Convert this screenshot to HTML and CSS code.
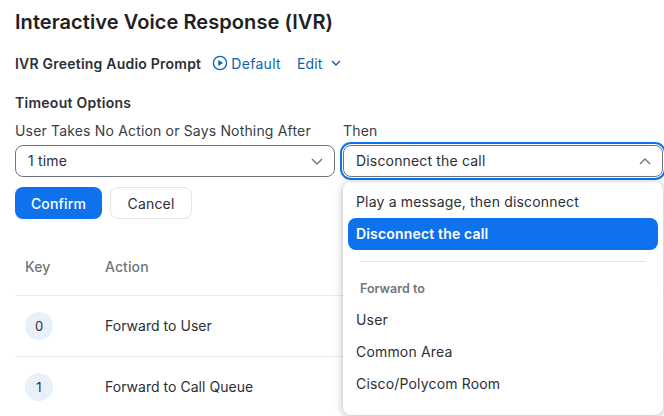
FILE: index.html
```html
<!DOCTYPE html>
<html lang="en">
<head>
<meta charset="utf-8">
<title>Interactive Voice Response (IVR)</title>
<link rel="stylesheet" href="styles.css">
</head>
<body>
<main class="page">
  <h1 class="title">Interactive Voice Response (IVR)</h1>
  <div class="greeting">
    <span class="greeting-label">IVR Greeting Audio Prompt</span>
    <a class="link play-link">
      <svg class="play-icon" width="16" height="16" viewBox="0 0 16 16"><circle cx="8" cy="8" r="6.6" fill="none" stroke="currentColor" stroke-width="1.3"/><path d="M6.3 5.1v5.8L11 8z" fill="currentColor"/></svg>
      Default
    </a>
    <a class="link edit-link">
      Edit
      <svg width="10" height="6" viewBox="0 0 10 6"><path d="M1 1l4 4 4-4" fill="none" stroke="currentColor" stroke-width="1.4"/></svg>
    </a>
  </div>
  <h2 class="section-title">Timeout Options</h2>
  <div class="fields">
    <div class="field">
      <label class="field-label">User Takes No Action or Says Nothing After</label>
      <div class="select">
        <span class="select-text">1 time</span>
        <svg width="12" height="7" viewBox="0 0 12 7"><path d="M1 1l5 5 5-5" fill="none" stroke="#6e7680" stroke-width="1.4"/></svg>
      </div>
    </div>
    <div class="field open-field">
      <label class="field-label">Then</label>
      <div class="select select-open">
        <span class="select-text">Disconnect the call</span>
        <svg width="12" height="7" viewBox="0 0 12 7"><path d="M1 6l5-5 5 5" fill="none" stroke="#6e7680" stroke-width="1.4"/></svg>
      </div>
      <div class="menu">
        <div class="option">Play a message, then disconnect</div>
        <div class="option option-selected">Disconnect the call</div>
        <div class="divider"></div>
        <div class="group-label">Forward to</div>
        <div class="option">User</div>
        <div class="option">Common Area</div>
        <div class="option">Cisco/Polycom Room</div>
      </div>
    </div>
  </div>
  <div class="actions">
    <button class="btn btn-primary">Confirm</button>
    <button class="btn btn-secondary">Cancel</button>
  </div>
  <div class="table">
    <div class="row head-row"><span class="col-key">Key</span><span>Action</span></div>
    <div class="row"><span class="col-key"><span class="key">0</span></span><span class="row-text">Forward to User</span></div>
    <div class="row"><span class="col-key"><span class="key">1</span></span><span class="row-text">Forward to Call Queue</span></div>
  </div>
</main>
</body>
</html>
```
FILE: styles.css
```css
* { box-sizing: border-box; }
html, body { margin: 0; height: 100%; overflow: hidden; background: #fff; }
body { font-family: Inter, "Liberation Sans", sans-serif; color: #232333; font-size: 14px; letter-spacing: .17px; }
.page { width: 664px; height: 416px; padding: 9px 0 0 15px; overflow: hidden; }
.title { margin: 0; font-size: 20px; line-height: 26px; font-weight: 600; color: #1f2024; letter-spacing: .07px; }
.greeting { display: flex; align-items: center; height: 24px; margin-top: 16px; }
.greeting-label { font-weight: 600; font-size: 14px; color: #2c2f36; letter-spacing: .22px; }
.link { display: flex; align-items: center; color: #0e5fb5; font-size: 14px; }
.play-link { gap: 3px; margin-left: 11px; letter-spacing: .3px; }
.edit-link { gap: 8px; margin-left: 16px; }
.section-title { margin: 18px 0 0; font-size: 14px; line-height: 20px; font-weight: 600; color: #2c2f36; letter-spacing: .27px; }
.fields { display: flex; gap: 8px; margin-top: 8px; }
.field { position: relative; width: 320px; }
.field-label { display: block; line-height: 20px; font-size: 14px; color: #3a3d45; margin-bottom: 4px; }
.select { display: flex; align-items: center; justify-content: space-between; height: 32px; padding: 0 11px 0 12px; border: 1px solid #6e7680; border-radius: 8px; font-size: 14px; color: #2c2f36; background: #fff; }
.select-text { padding-bottom: 2px; }
.select-open { box-shadow: 0 0 0 1px #fff, 0 0 0 3px #0e72ed; }
.menu { position: absolute; top: 61px; left: 0; width: 320px; height: 233px; padding: 4px 5px; background: #fff; border-radius: 8px; box-shadow: 0 1px 8px rgba(35, 35, 51, .35); z-index: 2; }
.option { height: 32px; line-height: 32px; padding: 0 8px; font-size: 14px; color: #2c2f36; }
.option-selected { background: #0e72ed; color: #fff; font-weight: 600; border-radius: 8px; }
.divider { height: 1px; margin: 11px 12px 0; background: #e3e5e8; }
.group-label { height: 42px; padding: 0 12px; line-height: 53px; font-size: 12.5px; font-weight: 600; color: #6e7680; letter-spacing: 0; }
.actions { display: flex; gap: 8px; margin-top: 10px; }
.btn { height: 32px; border-radius: 8px; font: 14px Inter, "Liberation Sans", sans-serif; padding: 0; letter-spacing: .17px; }
.btn-primary { width: 87px; background: #0e72ed; border: 0; color: #fff; font-weight: 500; }
.btn-secondary { width: 82px; background: #fff; border: 1px solid #e3e5e8; color: #2c2f36; }
.table { margin-top: 22px; width: 649px; }
.row { display: flex; align-items: center; height: 61px; border-bottom: 1px solid #e9ebee; color: #2c2f36; font-size: 14px; letter-spacing: .03px; }
.row-text { padding-bottom: 2px; }
.head-row { height: 55px; padding-bottom: 4px; color: #6e7680; font-weight: 500; letter-spacing: .1px; }
.col-key { width: 90px; padding-left: 10px; }
.key { display: flex; align-items: center; justify-content: center; width: 28px; height: 28px; border-radius: 50%; background: #e8f0fc; font-size: 13px; }
```
